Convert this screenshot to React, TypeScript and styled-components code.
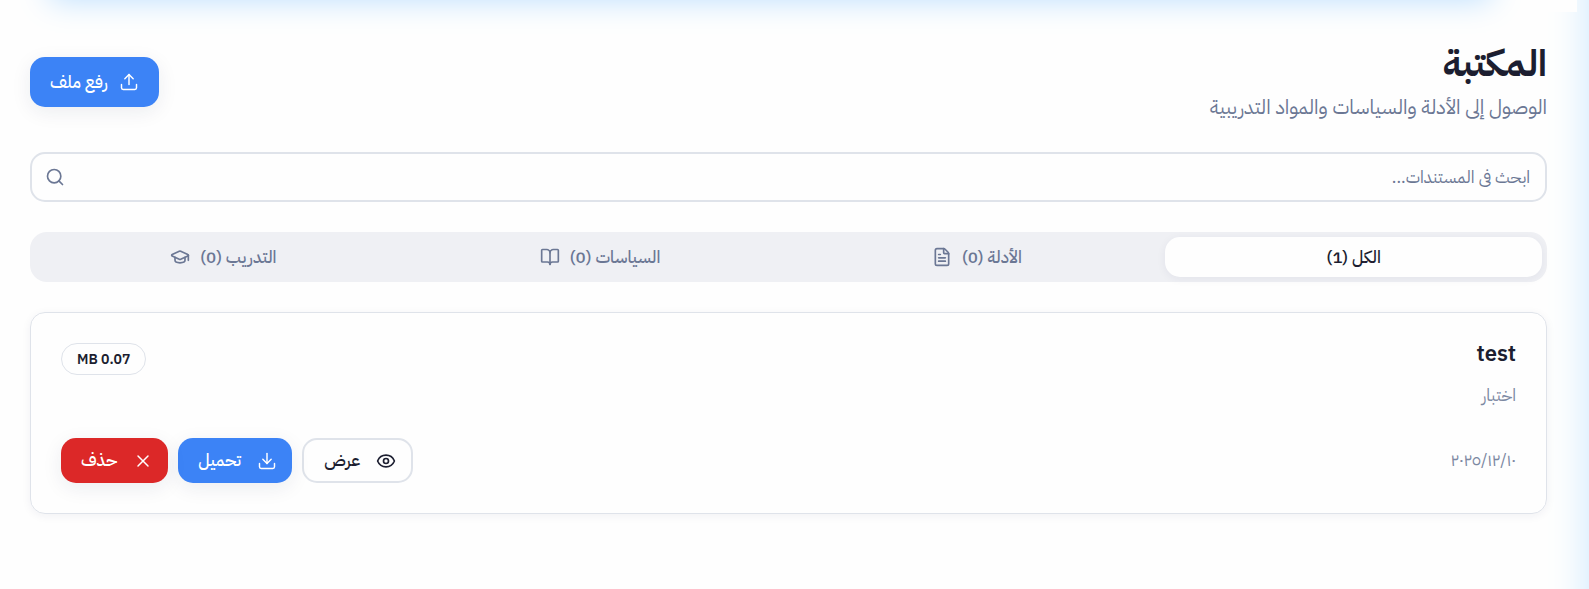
import React from 'react';
import styled, { createGlobalStyle, css } from 'styled-components';
import { Upload, Search, FileText, BookOpen, GraduationCap, Eye, Download, X } from 'lucide-react';

const GlobalStyle = createGlobalStyle`
  * { box-sizing: border-box; }
  body {
    margin: 0;
    background: #fefefe;
    color: #1c1e30;
    font-family: "IBM Plex Sans Arabic", "Noto Sans", "DejaVu Sans", sans-serif;
    font-size: 17px;
  }
  button, input { font: inherit; }
  h1, h2, p { margin: 0; }
`;

const Shell = styled.div`
  display: flex;
  min-height: 100vh;
  overflow: hidden;
`;

const Sidebar = styled.aside`
  flex: 0 0 100px;
  margin: -50px -100px -50px 0;
  box-shadow: 0 0 40px #cbe8fe;
`;

const Content = styled.div`
  flex: 1;
  min-width: 0;
`;

const TopStrip = styled.div`
  height: 12px;
  margin-right: 12px;
  background: #fefefe;
`;

const Banner = styled.div`
  height: 100px;
  margin: 0 86px 0 50px;
  transform: translateY(-100%);
  box-shadow: 0 0 30px #bcdffe;
`;

const Main = styled.main`
  display: grid;
  gap: 30px;
  padding: 30px 42px 30px 30px;
`;

const PageHeader = styled.header`
  display: flex;
  align-items: center;
  justify-content: space-between;
  height: 80px;
`;

const Title = styled.h1`
  font-size: 37px;
  line-height: 50px;
  font-weight: 700;
`;

const Subtitle = styled.p`
  font-size: 20px;
  line-height: 36px;
  color: #6b7794;
`;

const Button = styled.button<{ $tone?: 'primary' | 'danger' | 'outline'; $large?: boolean }>`
  display: inline-flex;
  align-items: center;
  gap: ${p => (p.$large ? 11 : 16)}px;
  height: ${p => (p.$large ? 50 : 45)}px;
  padding: ${p => (p.$large ? '0 20px' : '0 15px 0 20px')};
  border: 0;
  border-radius: 15px;
  font-weight: 500;
  white-space: nowrap;
  color: #fff;
  background: ${p => (p.$tone === 'danger' ? '#dc2828' : '#3c83f6')};
  box-shadow: 0 5px 20px rgba(28, 40, 80, 0.08);
  ${p => p.$tone === 'outline' && css`
    color: #1c1e30;
    background: #fefefe;
    border: 2px solid #dfe3ea;
    box-shadow: none;
  `}
`;

const SearchField = styled.label`
  display: flex;
  align-items: center;
  height: 50px;
  padding: 0 15px 0 13px;
  border: 2px solid #dfe3ea;
  border-radius: 15px;
  color: #6b7794;
`;

const SearchInput = styled.input`
  flex: 1;
  min-width: 0;
  padding: 0;
  border: 0;
  outline: 0;
  background: none;
  color: #1c1e30;
  &::placeholder { color: #6b7794; opacity: 1; }
`;

const Tabs = styled.div`
  display: grid;
  grid-template-columns: repeat(4, 1fr);
  height: 50px;
  padding: 5px;
  border-radius: 17px;
  background: #eff0f4;
`;

const Tab = styled.button`
  display: flex;
  align-items: center;
  justify-content: center;
  gap: 10px;
  padding: 0;
  border: 0;
  border-radius: 15px;
  font-weight: 500;
  color: #6b7794;
  background: none;
  &[aria-selected='true'] {
    color: #1c1e30;
    background: #fefefe;
    box-shadow: 0 2px 10px rgba(28, 30, 80, 0.06);
  }
`;

const Card = styled.article`
  padding: 30px;
  border: 1px solid #dfe3ea;
  border-radius: 15px;
  box-shadow: 0 2px 10px rgba(28, 40, 80, 0.06);
`;

const CardTop = styled.div`
  display: flex;
  align-items: flex-start;
  justify-content: space-between;
`;

const CardTitle = styled.h2`
  font-size: 22px;
  line-height: 22px;
  font-weight: 600;
`;

const Muted = styled.p`
  color: #7c88a2;
  line-height: 24px;
`;

const Description = styled(Muted)`
  margin-top: 19px;
`;

const Badge = styled.span`
  display: inline-flex;
  align-items: center;
  height: 32px;
  padding: 0 15px;
  border: 1px solid #dfe3ea;
  border-radius: 16px;
  font-size: 14px;
  font-weight: 600;
`;

const CardBottom = styled.div`
  display: flex;
  align-items: center;
  justify-content: space-between;
  margin-top: 30px;
`;

const Actions = styled.div`
  display: flex;
  gap: 10px;
`;

const icon = { size: 20, strokeWidth: 2, 'aria-hidden': true };
const thinIcon = { ...icon, strokeWidth: 1.75 };

const tabs = [
  { label: 'الكل (1)' },
  { label: 'الأدلة (0)', Icon: FileText },
  { label: 'السياسات (0)', Icon: BookOpen },
  { label: 'التدريب (0)', Icon: GraduationCap },
];

export default function App() {
  return (
    <Shell dir="rtl" lang="ar">
      <GlobalStyle />
      <Sidebar />
      <Content>
        <TopStrip>
          <Banner />
        </TopStrip>
        <Main>
          <PageHeader>
            <div>
              <Title>المكتبة</Title>
              <Subtitle>الوصول إلى الأدلة والسياسات والمواد التدريبية</Subtitle>
            </div>
            <Button $large><Upload {...thinIcon} />رفع ملف</Button>
          </PageHeader>
          <SearchField>
            <SearchInput type="text" aria-label="ابحث" placeholder="ابحث فى المستندات..." />
            <Search {...icon} />
          </SearchField>
          <Tabs role="tablist">
            {tabs.map(({ label, Icon }, i) => (
              <Tab key={label} role="tab" aria-selected={i === 0}>
                {label}
                {Icon && <Icon {...icon} />}
              </Tab>
            ))}
          </Tabs>
          <Card>
            <CardTop>
              <div>
                <CardTitle>test</CardTitle>
                <Description>اختبار</Description>
              </div>
              <Badge>0.07 MB</Badge>
            </CardTop>
            <CardBottom>
              <Muted>١٠‏/١٢‏/٢٠٢٥</Muted>
              <Actions>
                <Button $tone="outline"><Eye {...icon} />عرض</Button>
                <Button><Download {...thinIcon} />تحميل</Button>
                <Button $tone="danger"><X {...thinIcon} />حذف</Button>
              </Actions>
            </CardBottom>
          </Card>
        </Main>
      </Content>
    </Shell>
  );
}
